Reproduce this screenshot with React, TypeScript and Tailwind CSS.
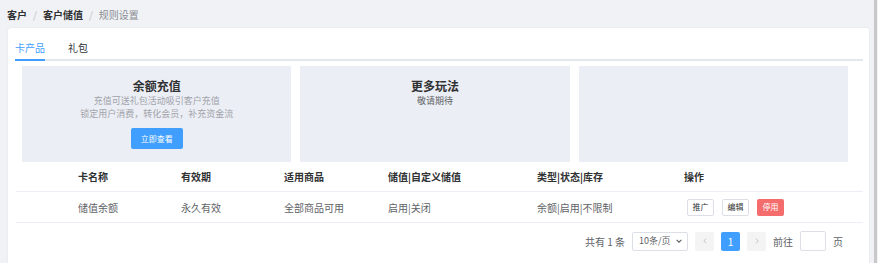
import React from "react";

const font = { fontFamily: '"Noto Sans CJK SC", "Noto Sans", sans-serif' };

function Panel({ title, lines, sub, button }: { title?: string; lines?: string[]; sub?: string; button?: string }) {
  return (
    <div className="h-[96px] bg-[#eceef5] flex flex-col items-center pt-[12px]">
      {title && <div className="text-[12px] leading-[16px] font-bold text-[#303133]">{title}</div>}
      {lines &&
        lines.map((l) => (
          <div key={l} className="text-[9px] leading-[13px] text-[#a0a3a9]">
            {l}
          </div>
        ))}
      {sub && <div className="text-[9px] leading-[13px] text-[#606266]">{sub}</div>}
      {button && (
        <div className="mt-[8px] w-[52px] h-[21px] bg-[#409eff] rounded-[2px] text-white text-[8px] flex items-center justify-center">
          {button}
        </div>
      )}
    </div>
  );
}

export default function App() {
  const cols = "grid grid-cols-[62px_103px_103px_104px_149px_147px_1fr]";
  return (
    <div style={font} className="w-[878px] h-[263px] flex bg-[#f0f2f5] overflow-hidden">
      <div className="flex-1 flex flex-col">
        <div className="pt-[8px] pl-[7px] flex items-center text-[10px] leading-[14px]">
          <span className="font-bold text-[#303133]">客户</span>
          <span className="mx-[6px] text-[#c0c4cc]">/</span>
          <span className="font-bold text-[#303133]">客户储值</span>
          <span className="mx-[6px] text-[#c0c4cc]">/</span>
          <span className="text-[#8a8d93]">规则设置</span>
        </div>
        <div className="mt-[6px] ml-[8px] mr-[5px] flex-1 bg-white rounded-t-[3px] shadow-[0_0_2px_rgba(0,0,0,0.08)] pl-[7px] pr-[6px] pt-[10px]">
          {/* tabs */}
          <div className="flex gap-[23px] border-b-[2px] border-[#e4e7ed] text-[10px]">
            <div className="leading-[20px] pb-[1px] -mb-[2px] border-b-[2px] border-[#409eff] text-[#409eff]">卡产品</div>
            <div className="leading-[20px] pb-[1px] -mb-[2px] border-b-[2px] border-transparent text-[#303133]">礼包</div>
          </div>
          {/* panels */}
          <div className="mt-[5px] ml-[7px] mr-[15px] grid grid-cols-3 gap-[9px]">
            <Panel
              title="余额充值"
              lines={["充值可送礼包活动吸引客户充值", "锁定用户消费，转化会员，补充资金流"]}
              button="立即查看"
            />
            <Panel title="更多玩法" sub="敬请期待" />
            <Panel />
          </div>
          {/* table */}
          <div className="ml-[1px] text-[10px]">
            <div className={`${cols} h-[30px] items-center border-b border-[#ebeef5] font-bold text-[#303133]`}>
              <div />
              <div>卡名称</div>
              <div>有效期</div>
              <div>适用商品</div>
              <div>储值|自定义储值</div>
              <div>类型|状态|库存</div>
              <div>操作</div>
            </div>
            <div className={`${cols} h-[31px] items-center border-b border-[#ebeef5] text-[#606266]`}>
              <div />
              <div>储值余额</div>
              <div>永久有效</div>
              <div>全部商品可用</div>
              <div>启用|关闭</div>
              <div>余额|启用|不限制</div>
              <div className="flex gap-[8px] pl-[3px]">
                <div className="w-[27px] h-[17px] border border-[#dcdfe6] rounded-[2px] bg-white text-[8px] text-[#303133] flex items-center justify-center">推广</div>
                <div className="w-[27px] h-[17px] border border-[#dcdfe6] rounded-[2px] bg-white text-[8px] text-[#303133] flex items-center justify-center">编辑</div>
                <div className="w-[27px] h-[17px] rounded-[2px] bg-[#f56c6c] text-[8px] text-white flex items-center justify-center">停用</div>
              </div>
            </div>
          </div>
          {/* pagination */}
          <div className="mt-[8px] flex justify-end items-center gap-[7px] pr-[20px] text-[10px] text-[#606266]">
            <span>共有 1 条</span>
            <div className="w-[56px] h-[19px] border border-[#dcdfe6] rounded-[2px] flex items-center justify-between pl-[6px] pr-[4px] text-[9px]">
              <span>10条/页</span>
              <svg width="8" height="8" viewBox="0 0 10 10">
                <path d="M2 3.5 L5 6.5 L8 3.5" fill="none" stroke="#606266" strokeWidth="1.4" />
              </svg>
            </div>
            <div className="w-[19px] h-[19px] bg-[#f4f4f5] rounded-[2px] flex items-center justify-center">
              <svg width="8" height="8" viewBox="0 0 10 10">
                <path d="M6.5 2 L3.5 5 L6.5 8" fill="none" stroke="#c0c4cc" strokeWidth="1.2" />
              </svg>
            </div>
            <div className="w-[19px] h-[19px] bg-[#409eff] rounded-[2px] flex items-center justify-center text-white text-[10px]">1</div>
            <div className="w-[19px] h-[19px] bg-[#f4f4f5] rounded-[2px] flex items-center justify-center">
              <svg width="8" height="8" viewBox="0 0 10 10">
                <path d="M3.5 2 L6.5 5 L3.5 8" fill="none" stroke="#c0c4cc" strokeWidth="1.2" />
              </svg>
            </div>
            <span>前往</span>
            <div className="w-[26px] h-[20px] border border-[#dcdfe6] rounded-[2px] bg-white" />
            <span>页</span>
          </div>
        </div>
      </div>
      <div className="w-[3px] bg-[#c8c8c8]" />
      <div className="w-[1px] bg-[#f2f2f2]" />
    </div>
  );
}
